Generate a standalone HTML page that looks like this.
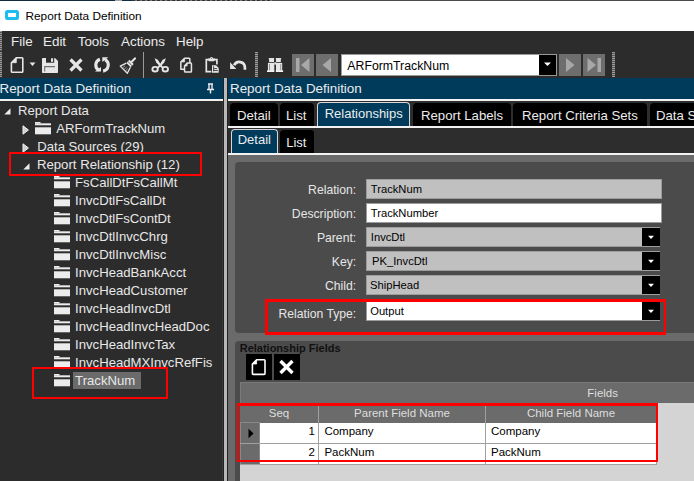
<!DOCTYPE html>
<html><head><meta charset="utf-8"><style>
html,body{margin:0;padding:0;width:694px;height:481px;overflow:hidden;background:#2b2b2b}
body>div{position:absolute}
.t{position:absolute;white-space:nowrap;line-height:20px;font-family:"Liberation Sans",sans-serif}
svg{position:absolute}
</style></head><body>
<div style="left:0px;top:0px;width:694px;height:1px;background:#4c4c4c"></div>
<div style="left:0px;top:0px;width:115px;height:1px;background:#0e2c44"></div>
<div style="left:115px;top:0px;width:7px;height:1px;background:#a8a8a8"></div>
<div style="left:122px;top:0px;width:10px;height:1px;background:#0e2c44"></div>
<div style="left:132px;top:0px;width:140px;height:1px;background:repeating-linear-gradient(90deg,#333 0 3px,#777 3px 5px)"></div>
<div style="left:0px;top:1px;width:694px;height:30px;background:#ffffff"></div>
<div style="left:5px;top:10px;width:14px;height:10px;border:3px solid #1cbdf0;box-sizing:border-box;border-radius:2.5px;background:#fff"></div>
<div class="t" style="left:25.5px;top:6px;font-size:11.8px;color:#000;">Report Data Definition</div>
<div style="left:0px;top:31px;width:694px;height:20px;background:#2c2c2c"></div>
<div style="left:0px;top:31px;width:2px;height:20px;background:repeating-linear-gradient(#9a9a9a 0 1px,#555 1px 2px)"></div>
<div class="t" style="left:11px;top:32px;font-size:13.4px;color:#ececec;">File</div>
<div class="t" style="left:43px;top:32px;font-size:13.4px;color:#ececec;">Edit</div>
<div class="t" style="left:77.7px;top:32px;font-size:13.4px;color:#ececec;">Tools</div>
<div class="t" style="left:121px;top:32px;font-size:13.4px;color:#ececec;">Actions</div>
<div class="t" style="left:176px;top:32px;font-size:13.4px;color:#ececec;">Help</div>
<div style="left:0px;top:51px;width:694px;height:27px;background:#2c2c2c"></div>
<div style="left:0px;top:52px;width:2px;height:25px;background:repeating-linear-gradient(#9a9a9a 0 1px,#555 1px 2px)"></div>
<div style="left:255px;top:52px;width:3px;height:25px;background:repeating-linear-gradient(#9a9a9a 0 1px,#555 1px 2px)"></div>
<div style="left:612px;top:52px;width:3px;height:25px;background:repeating-linear-gradient(#9a9a9a 0 1px,#555 1px 2px)"></div>
<div style="left:143px;top:52px;width:1px;height:25.5px;background:#9a9a9a"></div>
<svg style="position:absolute;left:10px;top:56px;" width="16" height="18" viewBox="0 0 16 18"><path d="M6.3 1.8 H12 Q12.8 1.8 12.8 2.6 V15.4 Q12.8 16.2 12 16.2 H2.2 Q1.4 16.2 1.4 15.4 V6.7 Z" fill="none" stroke="#e6e6e6" stroke-width="1.6" stroke-linejoin="round"/><path d="M1.4 6.7 L6.3 1.8 V6.7 Z" fill="#e6e6e6" stroke="#e6e6e6" stroke-width="0.8" stroke-linejoin="round"/></svg>
<svg style="position:absolute;left:29px;top:62px;" width="7" height="5" viewBox="0 0 7 5"><path d="M0.5 0.5 H6.5 L3.5 4 Z" fill="#e6e6e6"/></svg>
<svg style="position:absolute;left:41px;top:57px;" width="18" height="17" viewBox="0 0 18 17"><path d="M1 1.8 Q1 1 1.8 1 H14 L17 4 V15.2 Q17 16 16.2 16 H1.8 Q1 16 1 15.2 Z" fill="#e6e6e6"/><rect x="5" y="0.5" width="8.2" height="5.2" fill="#2c2c2c"/><rect x="10" y="1.3" width="2.1" height="3.5" fill="#e6e6e6"/><path d="M3.7 14.5 V9.6 H14" fill="none" stroke="#707070" stroke-width="1.1"/></svg>
<svg style="position:absolute;left:68px;top:57px;" width="16" height="16" viewBox="0 0 16 16"><path d="M2.5 2.5 L13.5 13.5 M13.5 2.5 L2.5 13.5" stroke="#e6e6e6" stroke-width="3.2" stroke-linecap="butt"/></svg>
<svg style="position:absolute;left:93px;top:56px;" width="18" height="17" viewBox="0 0 18 17"><path d="M6.9 3.2 A6.2 6.2 0 0 0 5.9 14.4" fill="none" stroke="#e6e6e6" stroke-width="3.1"/><path d="M1.9 15.6 H8 V10.9 Z" fill="#e6e6e6"/><path d="M12.1 3.6 A6.2 6.2 0 0 1 10.1 15.1" fill="none" stroke="#e6e6e6" stroke-width="3.1"/><path d="M9.3 1.2 H15.3 L9.3 6.1 Z" fill="#e6e6e6"/></svg>
<svg style="position:absolute;left:119px;top:56px;" width="18" height="18" viewBox="0 0 18 18"><g transform="translate(16.4,2.1) rotate(45)"><rect x="-1" y="-0.5" width="2" height="6.2" fill="#e6e6e6" rx="0.8"/><rect x="-3" y="5.4" width="6" height="4.4" fill="#e6e6e6"/><rect x="-3" y="7.3" width="6" height="0.8" fill="#666"/><path d="M-2.9 10 L-5 16.4 H5 L2.9 10" fill="none" stroke="#e6e6e6" stroke-width="1.3" stroke-linejoin="round"/><path d="M-2.3 15.8 L-1.8 12.8 M0 15.8 V12.3 M2.3 15.8 L1.8 12.8" stroke="#aaa" stroke-width="0.8"/></g></svg>
<svg style="position:absolute;left:150px;top:56px;" width="20" height="18" viewBox="0 0 20 18"><path d="M4.6 2.2 L7.8 3.8 L10.8 8.4 L13.8 11.4 L12.2 12.6 L9 9.6 L6.2 6.4 Z" fill="#e6e6e6"/><path d="M15.9 2.2 L12.7 3.8 L9.7 8.4 L6.7 11.4 L8.3 12.6 L11.5 9.6 L14.3 6.4 Z" fill="#e6e6e6"/><ellipse cx="5.1" cy="13.2" rx="2.7" ry="2.3" fill="none" stroke="#e6e6e6" stroke-width="1.9"/><ellipse cx="15.3" cy="13.2" rx="2.7" ry="2.3" fill="none" stroke="#e6e6e6" stroke-width="1.9"/></svg>
<svg style="position:absolute;left:178px;top:56px;" width="17" height="18" viewBox="0 0 17 18"><path d="M6.55 13.25 H2.85 V6 L6.6 2.15 H11.1 Q11.85 2.15 11.85 2.9 V6.95" fill="none" stroke="#e6e6e6" stroke-width="1.5" stroke-linejoin="round"/><path d="M2.85 6 L6.6 2.15 V6 Z" fill="#e6e6e6" stroke="#e6e6e6" stroke-width="0.6"/><path d="M9.2 6.95 H12.7 Q13.45 6.95 13.45 7.7 V15.2 Q13.45 15.95 12.7 15.95 H7.3 Q6.55 15.95 6.55 15.2 V10 Z" fill="#2c2c2c" stroke="#e6e6e6" stroke-width="1.5" stroke-linejoin="round"/><path d="M6.55 10 L9.2 6.95 V10 Z" fill="#e6e6e6" stroke="#e6e6e6" stroke-width="0.6"/></svg>
<svg style="position:absolute;left:203px;top:56px;" width="18" height="18" viewBox="0 0 18 18"><path d="M8.9 15.7 H3.3 V3.7 H13.9 V8.5" fill="none" stroke="#e6e6e6" stroke-width="1.7"/><path d="M4.8 2.6 H12.2 L11.2 5.3 H5.8 Z" fill="#e6e6e6"/><circle cx="8.5" cy="2.3" r="1.4" fill="#e6e6e6"/><circle cx="8.5" cy="2.3" r="0.5" fill="#555"/><path d="M8.4 8.6 H13.2 L16.3 11.6 V17.2 H8.4 Z" fill="#2c2c2c"/><path d="M9 9.2 H13 L15.7 12 V16.7 H9 Z" fill="#e6e6e6"/><path d="M10.6 10.2 V15.4 M10.6 12.6 H14.2 M10.6 14.5 H14.8" stroke="#4a4a4a" stroke-width="1"/></svg>
<svg style="position:absolute;left:228px;top:57px;" width="20" height="15" viewBox="0 0 20 15"><path d="M6.2 8.3 A5.6 5.6 0 0 1 16.9 10.5 V12.8" fill="none" stroke="#e6e6e6" stroke-width="2.7"/><path d="M2.1 5.2 V11.9 H8.3 Z" fill="#e6e6e6"/></svg>
<svg style="position:absolute;left:266px;top:57px;" width="18" height="16" viewBox="0 0 18 16"><rect x="2.7" y="1.2" width="5.5" height="1.1" fill="#e6e6e6"/><rect x="3.1" y="1.2" width="4.9" height="3.9" fill="#e6e6e6"/><rect x="9.8" y="1.2" width="5.4" height="1.1" fill="#e6e6e6"/><rect x="10" y="1.2" width="4.8" height="3.9" fill="#e6e6e6"/><rect x="8.3" y="5.3" width="1.7" height="2.3" fill="#e6e6e6"/><rect x="1.9" y="5.9" width="6.4" height="8" fill="#e6e6e6"/><rect x="10" y="5.9" width="6.2" height="8" fill="#e6e6e6"/><rect x="1" y="13.3" width="7.3" height="1.7" fill="#f4f4f4"/><rect x="9.8" y="13.3" width="7.3" height="1.7" fill="#f4f4f4"/><rect x="3" y="7" width="0.9" height="6.2" fill="#8a8a8a"/><rect x="14.3" y="7" width="0.9" height="6.2" fill="#8a8a8a"/></svg>
<div style="left:292px;top:54px;width:22px;height:22px;background:#6e6e6e"></div>
<svg style="position:absolute;left:292px;top:54px;" width="22" height="22" viewBox="0 0 22 22"><rect x="4" y="4" width="3.5" height="14" fill="#a8a8a8"/><path d="M17.5 4 V18 L9 11 Z" fill="#a8a8a8"/></svg>
<div style="left:316px;top:54px;width:22px;height:22px;background:#6e6e6e"></div>
<svg style="position:absolute;left:316px;top:54px;" width="22" height="22" viewBox="0 0 22 22"><path d="M15 4 V18 L6.5 11 Z" fill="#a8a8a8"/></svg>
<div style="left:559px;top:54px;width:22px;height:22px;background:#6e6e6e"></div>
<svg style="position:absolute;left:559px;top:54px;" width="22" height="22" viewBox="0 0 22 22"><path d="M7 4 V18 L15.5 11 Z" fill="#a8a8a8"/></svg>
<div style="left:583px;top:54px;width:22px;height:22px;background:#6e6e6e"></div>
<svg style="position:absolute;left:583px;top:54px;" width="22" height="22" viewBox="0 0 22 22"><path d="M4.5 4 V18 L13 11 Z" fill="#a8a8a8"/><rect x="14.5" y="4" width="3.5" height="14" fill="#a8a8a8"/></svg>
<div style="left:341px;top:54px;width:216px;height:22px;background:#fff;border:1px solid #9a9a9a;box-sizing:border-box"></div>
<div style="left:539px;top:55px;width:17px;height:20px;background:#000"></div>
<svg style="position:absolute;left:543px;top:61px;" width="9" height="6" viewBox="0 0 9 6"><path d="M1 1.5 H8 L4.5 5 Z" fill="#fff"/></svg>
<div class="t" style="left:347.3px;top:55.599999999999994px;font-size:12.3px;color:#000;">ARFormTrackNum</div>
<div style="left:0px;top:78px;width:223px;height:403px;background:#2c2c2c"></div>
<div style="left:0px;top:78px;width:223px;height:21px;background:#003b5c"></div>
<div style="left:0px;top:99px;width:223px;height:2px;background:#f2f2f2"></div>
<div class="t" style="left:-0.5px;top:78.5px;font-size:13.4px;color:#ececec;">Report Data Definition</div>
<svg style="position:absolute;left:206px;top:83px;" width="9" height="11" viewBox="0 0 9 11"><path d="M2 1 H7 M3 1 V6 M6 1 V6 M1 6.5 H8 M4.5 6.5 V10.5" stroke="#ececec" stroke-width="1.4" fill="none"/></svg>
<div style="left:221.5px;top:101px;width:1.5px;height:380px;background:#3a3a3a"></div>
<div style="left:223px;top:78px;width:1px;height:403px;background:#222"></div>
<div style="left:224px;top:78px;width:3px;height:403px;background:#b8b8b8"></div>
<div style="left:227px;top:78px;width:1px;height:403px;background:#222"></div>
<svg style="position:absolute;left:4px;top:108px;" width="8" height="8" viewBox="0 0 8 8"><path d="M6.5 0.3 V6.6 H0.3 Z" fill="#ececec"/></svg>
<div class="t" style="left:18px;top:101px;font-size:13.15px;color:#e8e8e8;">Report Data</div>
<svg style="position:absolute;left:21.5px;top:124.5px;" width="8" height="11" viewBox="0 0 8 11"><path d="M1 0.8 L6.4 5 L1 9.2 Z" fill="#cfcfcf" stroke="#f4f4f4" stroke-width="1"/></svg>
<svg style="position:absolute;left:35px;top:122px;" width="17" height="13" viewBox="0 0 17 13"><rect x="0" y="0" width="5.5" height="1.5" fill="#ececec"/><rect x="0" y="1.3" width="16" height="2" fill="#ececec"/><rect x="0" y="5.3" width="16" height="7" fill="#ececec"/></svg>
<div class="t" style="left:56.3px;top:119px;font-size:13.15px;color:#e8e8e8;">ARFormTrackNum</div>
<svg style="position:absolute;left:21.5px;top:142.5px;" width="8" height="11" viewBox="0 0 8 11"><path d="M1 0.8 L6.4 5 L1 9.2 Z" fill="#cfcfcf" stroke="#f4f4f4" stroke-width="1"/></svg>
<div class="t" style="left:37.2px;top:137px;font-size:13.15px;color:#e8e8e8;">Data Sources (29)</div>
<svg style="position:absolute;left:22.5px;top:162.5px;" width="8" height="8" viewBox="0 0 8 8"><path d="M6.5 0.3 V6.6 H0.3 Z" fill="#ececec"/></svg>
<div class="t" style="left:36.9px;top:155px;font-size:13.2px;color:#e8e8e8;">Report Relationship (12)</div>
<svg style="position:absolute;left:54px;top:176px;" width="17" height="13" viewBox="0 0 17 13"><rect x="0" y="0" width="5.5" height="1.5" fill="#ececec"/><rect x="0" y="1.3" width="16" height="2" fill="#ececec"/><rect x="0" y="5.3" width="16" height="7" fill="#ececec"/></svg>
<div class="t" style="left:75.1px;top:173px;font-size:13.15px;color:#e8e8e8;">FsCallDtFsCallMt</div>
<svg style="position:absolute;left:54px;top:194px;" width="17" height="13" viewBox="0 0 17 13"><rect x="0" y="0" width="5.5" height="1.5" fill="#ececec"/><rect x="0" y="1.3" width="16" height="2" fill="#ececec"/><rect x="0" y="5.3" width="16" height="7" fill="#ececec"/></svg>
<div class="t" style="left:75.1px;top:191px;font-size:13.15px;color:#e8e8e8;">InvcDtlFsCallDt</div>
<svg style="position:absolute;left:54px;top:212px;" width="17" height="13" viewBox="0 0 17 13"><rect x="0" y="0" width="5.5" height="1.5" fill="#ececec"/><rect x="0" y="1.3" width="16" height="2" fill="#ececec"/><rect x="0" y="5.3" width="16" height="7" fill="#ececec"/></svg>
<div class="t" style="left:75.1px;top:209px;font-size:13.15px;color:#e8e8e8;">InvcDtlFsContDt</div>
<svg style="position:absolute;left:54px;top:230px;" width="17" height="13" viewBox="0 0 17 13"><rect x="0" y="0" width="5.5" height="1.5" fill="#ececec"/><rect x="0" y="1.3" width="16" height="2" fill="#ececec"/><rect x="0" y="5.3" width="16" height="7" fill="#ececec"/></svg>
<div class="t" style="left:75.1px;top:227px;font-size:13.15px;color:#e8e8e8;">InvcDtlInvcChrg</div>
<svg style="position:absolute;left:54px;top:248px;" width="17" height="13" viewBox="0 0 17 13"><rect x="0" y="0" width="5.5" height="1.5" fill="#ececec"/><rect x="0" y="1.3" width="16" height="2" fill="#ececec"/><rect x="0" y="5.3" width="16" height="7" fill="#ececec"/></svg>
<div class="t" style="left:75.1px;top:245px;font-size:13.15px;color:#e8e8e8;">InvcDtlInvcMisc</div>
<svg style="position:absolute;left:54px;top:266px;" width="17" height="13" viewBox="0 0 17 13"><rect x="0" y="0" width="5.5" height="1.5" fill="#ececec"/><rect x="0" y="1.3" width="16" height="2" fill="#ececec"/><rect x="0" y="5.3" width="16" height="7" fill="#ececec"/></svg>
<div class="t" style="left:75.1px;top:263px;font-size:13.15px;color:#e8e8e8;">InvcHeadBankAcct</div>
<svg style="position:absolute;left:54px;top:284px;" width="17" height="13" viewBox="0 0 17 13"><rect x="0" y="0" width="5.5" height="1.5" fill="#ececec"/><rect x="0" y="1.3" width="16" height="2" fill="#ececec"/><rect x="0" y="5.3" width="16" height="7" fill="#ececec"/></svg>
<div class="t" style="left:75.1px;top:281px;font-size:13.15px;color:#e8e8e8;">InvcHeadCustomer</div>
<svg style="position:absolute;left:54px;top:302px;" width="17" height="13" viewBox="0 0 17 13"><rect x="0" y="0" width="5.5" height="1.5" fill="#ececec"/><rect x="0" y="1.3" width="16" height="2" fill="#ececec"/><rect x="0" y="5.3" width="16" height="7" fill="#ececec"/></svg>
<div class="t" style="left:75.1px;top:299px;font-size:13.15px;color:#e8e8e8;">InvcHeadInvcDtl</div>
<svg style="position:absolute;left:54px;top:320px;" width="17" height="13" viewBox="0 0 17 13"><rect x="0" y="0" width="5.5" height="1.5" fill="#ececec"/><rect x="0" y="1.3" width="16" height="2" fill="#ececec"/><rect x="0" y="5.3" width="16" height="7" fill="#ececec"/></svg>
<div class="t" style="left:75.1px;top:317px;font-size:13.15px;color:#e8e8e8;">InvcHeadInvcHeadDoc</div>
<svg style="position:absolute;left:54px;top:338px;" width="17" height="13" viewBox="0 0 17 13"><rect x="0" y="0" width="5.5" height="1.5" fill="#ececec"/><rect x="0" y="1.3" width="16" height="2" fill="#ececec"/><rect x="0" y="5.3" width="16" height="7" fill="#ececec"/></svg>
<div class="t" style="left:75.1px;top:335px;font-size:13.15px;color:#e8e8e8;">InvcHeadInvcTax</div>
<svg style="position:absolute;left:54px;top:356px;" width="17" height="13" viewBox="0 0 17 13"><rect x="0" y="0" width="5.5" height="1.5" fill="#ececec"/><rect x="0" y="1.3" width="16" height="2" fill="#ececec"/><rect x="0" y="5.3" width="16" height="7" fill="#ececec"/></svg>
<div class="t" style="left:75.1px;top:353px;font-size:13.15px;color:#e8e8e8;">InvcHeadMXInvcRefFis</div>
<div style="left:73px;top:372px;width:68px;height:17px;background:#6b6b6b"></div>
<svg style="position:absolute;left:54px;top:374px;" width="17" height="13" viewBox="0 0 17 13"><rect x="0" y="0" width="5.5" height="1.5" fill="#ececec"/><rect x="0" y="1.3" width="16" height="2" fill="#ececec"/><rect x="0" y="5.3" width="16" height="7" fill="#ececec"/></svg>
<div class="t" style="left:75.1px;top:371px;font-size:13.15px;color:#e8e8e8;">TrackNum</div>
<div style="left:8.5px;top:152px;width:193.3px;height:24.3px;border:2.5px solid #ff0000;box-sizing:border-box"></div>
<div style="left:31.5px;top:366.5px;width:136.3px;height:32.7px;border:2.5px solid #ff0000;box-sizing:border-box"></div>
<div style="left:228px;top:78px;width:466px;height:403px;background:#2d2d2d"></div>
<div style="left:228px;top:78px;width:466px;height:21px;background:#003b5c"></div>
<div style="left:228px;top:99px;width:466px;height:2px;background:#f2f2f2"></div>
<div class="t" style="left:230px;top:78.5px;font-size:13.4px;color:#ececec;">Report Data Definition</div>
<div style="left:230px;top:103px;width:48px;height:24px;background:#000;border-radius:4px 4px 0 0"></div>
<div class="t" style="left:237px;top:106px;font-size:13.2px;color:#ececec;">Detail</div>
<div style="left:280px;top:103px;width:34px;height:24px;background:#000;border-radius:4px 4px 0 0"></div>
<div class="t" style="left:286px;top:106px;font-size:13.2px;color:#ececec;">List</div>
<div style="left:413px;top:103px;width:97.5px;height:24px;background:#000;border-radius:4px 4px 0 0"></div>
<div class="t" style="left:421px;top:106px;font-size:13.2px;color:#ececec;">Report Labels</div>
<div style="left:513px;top:103px;width:133.5px;height:24px;background:#000;border-radius:4px 4px 0 0"></div>
<div class="t" style="left:522px;top:106px;font-size:13.2px;color:#ececec;">Report Criteria Sets</div>
<div style="left:649.5px;top:103px;width:110.5px;height:24px;background:#000;border-radius:4px 4px 0 0"></div>
<div class="t" style="left:656.0px;top:106px;font-size:13.2px;color:#ececec;">Data Sources</div>
<div style="left:317px;top:102px;width:93px;height:25px;background:#003b5c;border:1px solid #d8d8d8;border-bottom:none;box-sizing:border-box;border-radius:4px 4px 0 0"></div>
<div class="t" style="left:324.7px;top:103.5px;font-size:13px;color:#ececec;">Relationships</div>
<div style="left:228px;top:126px;width:466px;height:2px;background:#f2f2f2"></div>
<div style="left:280px;top:129.5px;width:33.8px;height:24px;background:#000;border-radius:4px 3px 0 0"></div>
<div class="t" style="left:286.2px;top:132.6px;font-size:13px;color:#ececec;">List</div>
<div style="left:231px;top:129px;width:46.5px;height:25px;background:#003b5c;border:1px solid #d8d8d8;border-bottom:none;box-sizing:border-box;border-radius:4px 4px 0 0"></div>
<div class="t" style="left:237.7px;top:130.4px;font-size:13px;color:#ececec;">Detail</div>
<div style="left:228px;top:153px;width:466px;height:2px;background:#f2f2f2"></div>
<div style="left:228px;top:155px;width:466px;height:326px;background:#6a6a6a"></div>
<div style="left:235px;top:162px;width:459px;height:171px;background:#4b4b4b;border-radius:4px 0 0 4px"></div>
<div class="t" style="right:337.8px;top:180px;font-size:12.2px;color:#e6e6e6;">Relation:</div>
<div style="left:365.5px;top:179px;width:296.5px;height:20px;background:#c0c0c0;border:1px solid #9c9c9c;box-sizing:border-box"></div>
<div class="t" style="left:370.8px;top:178.7px;font-size:11.2px;color:#000;">TrackNum</div>
<div class="t" style="right:337.8px;top:204px;font-size:12.2px;color:#e6e6e6;">Description:</div>
<div style="left:365.5px;top:203px;width:296.5px;height:20px;background:#ffffff;border:1px solid #9c9c9c;box-sizing:border-box"></div>
<div class="t" style="left:370.8px;top:202.7px;font-size:11.2px;color:#000;">TrackNumber</div>
<div class="t" style="right:337.8px;top:228px;font-size:12.2px;color:#e6e6e6;">Parent:</div>
<div style="left:365.5px;top:227px;width:294.5px;height:20px;background:#c0c0c0;border:1px solid #9c9c9c;box-sizing:border-box"></div>
<div class="t" style="left:370.8px;top:226.7px;font-size:11.2px;color:#000;">InvcDtl</div>
<div style="left:642px;top:228px;width:17.5px;height:18px;background:#000"></div>
<svg style="position:absolute;left:647px;top:235px;" width="8" height="5" viewBox="0 0 8 5"><path d="M1 0.8 H7 L4 3.9 Z" fill="#fff"/></svg>
<div class="t" style="right:337.8px;top:252px;font-size:12.2px;color:#e6e6e6;">Key:</div>
<div style="left:365.5px;top:251px;width:294.5px;height:20px;background:#c0c0c0;border:1px solid #9c9c9c;box-sizing:border-box"></div>
<div class="t" style="left:372.1px;top:250.7px;font-size:11.2px;color:#000;">PK_InvcDtl</div>
<div style="left:642px;top:252px;width:17.5px;height:18px;background:#000"></div>
<svg style="position:absolute;left:647px;top:259px;" width="8" height="5" viewBox="0 0 8 5"><path d="M1 0.8 H7 L4 3.9 Z" fill="#fff"/></svg>
<div class="t" style="right:337.8px;top:276px;font-size:12.2px;color:#e6e6e6;">Child:</div>
<div style="left:365.5px;top:275px;width:294.5px;height:20px;background:#c0c0c0;border:1px solid #9c9c9c;box-sizing:border-box"></div>
<div class="t" style="left:370px;top:274.7px;font-size:11.2px;color:#000;">ShipHead</div>
<div style="left:642px;top:276px;width:17.5px;height:18px;background:#000"></div>
<svg style="position:absolute;left:647px;top:283px;" width="8" height="5" viewBox="0 0 8 5"><path d="M1 0.8 H7 L4 3.9 Z" fill="#fff"/></svg>
<div class="t" style="right:337.8px;top:303.8px;font-size:12.2px;color:#e6e6e6;">Relation Type:</div>
<div style="left:365.5px;top:301px;width:294.5px;height:20px;background:#ffffff;border:1px solid #9c9c9c;box-sizing:border-box"></div>
<div class="t" style="left:370.2px;top:300.7px;font-size:11.2px;color:#000;">Output</div>
<div style="left:642px;top:302px;width:17.5px;height:18px;background:#000"></div>
<svg style="position:absolute;left:647px;top:309px;" width="8" height="5" viewBox="0 0 8 5"><path d="M1 0.8 H7 L4 3.9 Z" fill="#fff"/></svg>
<div style="left:265.1px;top:299.3px;width:400.5px;height:36.1px;border:solid #ff0000;border-width:3px 2.3px 3px 3px;box-sizing:border-box"></div>
<div style="left:235px;top:341px;width:459px;height:140px;background:#4b4b4b;border-radius:4px 0 0 0"></div>
<div class="t" style="left:239.7px;top:338px;font-size:11px;color:#111;font-weight:bold">Relationship Fields</div>
<div style="left:246px;top:354px;width:26px;height:26px;background:#000"></div>
<svg style="position:absolute;left:246px;top:354px;" width="26" height="26" viewBox="0 0 26 26"><path d="M10.6 5.8 H18.2 Q19 5.8 19 6.6 V19.6 Q19 20.4 18.2 20.4 H7.2 Q6.4 20.4 6.4 19.6 V10 Z" fill="none" stroke="#fff" stroke-width="1.6" stroke-linejoin="round"/><path d="M6.4 10 L10.6 5.8 V10 Z" fill="#fff" stroke="#fff" stroke-width="0.8" stroke-linejoin="round"/></svg>
<div style="left:274px;top:354px;width:26px;height:26px;background:#000"></div>
<svg style="position:absolute;left:274px;top:354px;" width="26" height="26" viewBox="0 0 26 26"><path d="M6.5 7 L18.5 19 M18.5 7 L6.5 19" stroke="#fff" stroke-width="3.4"/></svg>
<div style="left:240px;top:382px;width:454px;height:99px;background:#d4d4d4"></div>
<div style="left:240px;top:382px;width:454px;height:21px;background:#6b6b6b;border-top:1px solid #7a7a7a;border-left:1px solid #7a7a7a;box-sizing:border-box"></div>
<div class="t" style="right:76px;top:383px;font-size:11.5px;color:#dedede;">Fields</div>
<div style="left:240px;top:403px;width:416.5px;height:19.5px;background:#6b6b6b"></div>
<div style="left:318px;top:403px;width:1px;height:61px;background:#a0a0a0"></div>
<div style="left:485px;top:403px;width:1px;height:61px;background:#a0a0a0"></div>
<div class="t" style="left:129px;width:300px;text-align:center;top:403px;font-size:11.5px;color:#dedede;">Seq</div>
<div class="t" style="left:252px;width:300px;text-align:center;top:403px;font-size:11.5px;color:#dedede;">Parent Field Name</div>
<div class="t" style="left:421px;width:300px;text-align:center;top:403px;font-size:11.5px;color:#dedede;">Child Field Name</div>
<div style="left:240px;top:422.5px;width:19.5px;height:42px;background:#6b6b6b"></div>
<div style="left:240px;top:422px;width:19.5px;height:1px;background:#888"></div>
<div style="left:240px;top:422px;width:1px;height:42px;background:#888"></div>
<div style="left:258.5px;top:422px;width:1px;height:42px;background:#888"></div>
<div style="left:260px;top:422.5px;width:396.5px;height:41.5px;background:#fff"></div>
<div style="left:240px;top:443px;width:416.5px;height:1px;background:#a0a0a0"></div>
<div style="left:240px;top:464px;width:416.5px;height:1px;background:#a0a0a0"></div>
<div style="left:318px;top:422.5px;width:1px;height:42px;background:#a0a0a0"></div>
<div style="left:485px;top:422.5px;width:1px;height:42px;background:#a0a0a0"></div>
<div style="left:656px;top:403px;width:1px;height:62px;background:#a0a0a0"></div>
<svg style="position:absolute;left:247px;top:428px;" width="8" height="11" viewBox="0 0 8 11"><path d="M1.5 0.8 V10.2 L6.5 5.5 Z" fill="#000"/></svg>
<div class="t" style="right:379px;top:421.3px;font-size:11.5px;color:#000;">1</div>
<div class="t" style="right:379px;top:442px;font-size:11.5px;color:#000;">2</div>
<div class="t" style="left:324.4px;top:420.5px;font-size:11.5px;color:#000;">Company</div>
<div class="t" style="left:324.4px;top:441.5px;font-size:11.5px;color:#000;">PackNum</div>
<div class="t" style="left:491px;top:420.5px;font-size:11.5px;color:#000;">Company</div>
<div class="t" style="left:491px;top:441.5px;font-size:11.5px;color:#000;">PackNum</div>
<div style="left:237.3px;top:402.7px;width:420.7px;height:59.2px;border:solid #ff0000;border-width:3px 2.4px 2.7px 2.7px;box-sizing:border-box"></div>
</body></html>
